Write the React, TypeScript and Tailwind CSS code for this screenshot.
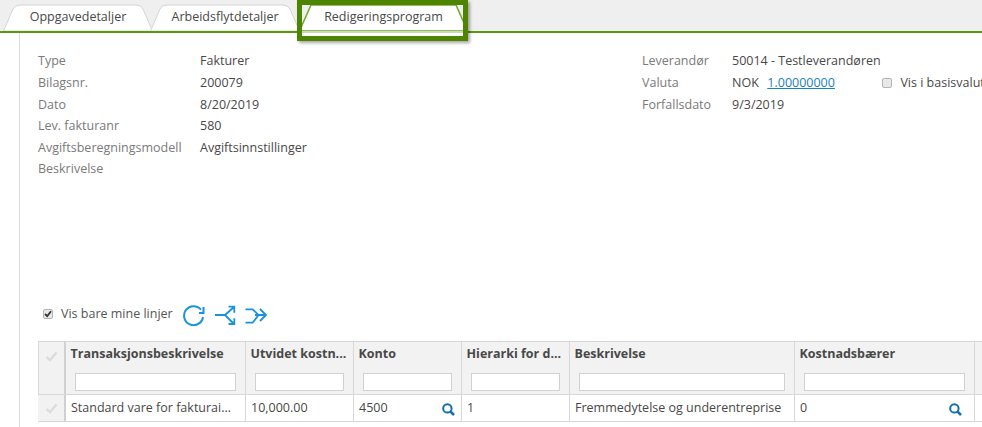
const FONT = "font-['Open_Sans',sans-serif]";

function Tab({ label, width, active, className = "" }: { label: string; width: number; active?: boolean; className?: string }) {
  const d = active
    ? `M0.5 31 L12 5 L${width - 12} 5 L${width - 0.5} 31 Z`
    : `M0.5 31 L10 9 Q12 5 17 5 L${width - 17} 5 Q${width - 12} 5 ${width - 10} 9 L${width - 0.5} 31 Z`;
  return (
    <div
      className={`relative flex h-[31px] items-center justify-center pt-[4px] text-[12.5px] text-[#484848] ${className}`}
      style={{ width }}
    >
      <svg className="absolute inset-0 h-full w-full" viewBox={`0 0 ${width} 31`} preserveAspectRatio="none">
        <path d={d} fill="#fff" stroke={active ? "#72a82e" : "#d4d4d4"} strokeWidth={active ? 1.5 : 1} />
      </svg>
      <span className="relative">{label}</span>
    </div>
  );
}

function Field({ label, children, labelWidth }: { label: string; children?: React.ReactNode; labelWidth: string }) {
  return (
    <div className="flex h-[21.6px] items-center">
      <span className={`${labelWidth} shrink-0 text-[#7a7a7a]`}>{label}</span>
      <span className="flex items-center whitespace-nowrap text-[#484848]">{children}</span>
    </div>
  );
}

function Box({ checked, className = "" }: { checked?: boolean; className?: string }) {
  return (
    <span className={`flex h-[10px] w-[10px] shrink-0 items-center justify-center rounded-[2px] border border-[#b4b4b4] bg-[#e8e8e8] ${className}`}>
      {checked && (
        <svg width="8" height="8" viewBox="0 0 8 8" fill="none" stroke="#333" strokeWidth="1.8">
          <path d="M1 4 L3.2 6.2 L7 1.2" />
        </svg>
      )}
    </span>
  );
}

function CheckMark() {
  return (
    <svg width="13" height="11" viewBox="0 0 13 11" fill="none" stroke="#dcdcdc" strokeWidth="2.4">
      <path d="M1.5 6 L5 9 L11.5 1.5" />
    </svg>
  );
}

function SearchIcon({ className }: { className: string }) {
  return (
    <svg className={`absolute top-[8px] ${className}`} width="13" height="13" viewBox="0 0 13 13" fill="none" stroke="#146fa8">
      <circle cx="5.4" cy="5.4" r="4.2" strokeWidth="2" />
      <path d="M8.6 8.6 L12 12" strokeWidth="2.6" />
    </svg>
  );
}

const columns = [
  { title: "Transaksjonsbeskrivelse", value: "Standard vare for fakturai...", width: "w-[180px]" },
  { title: "Utvidet kostn...", value: "10,000.00", width: "w-[108px]" },
  { title: "Konto", value: "4500", width: "w-[108px]", search: "right-[6px]" },
  { title: "Hierarki for d...", value: "1", width: "w-[108px]" },
  { title: "Beskrivelse", value: "Fremmedytelse og underentreprise", width: "w-[225px]" },
  { title: "Kostnadsbærer", value: "0", width: "w-[180px]", search: "right-[12px]" },
];

export default function App() {
  return (
    <div className={`${FONT} h-[427px] w-[982px] overflow-hidden bg-white text-[12.5px]`}>
      <div className="relative h-[33px] border-b-2 border-[#5a9a08] bg-[#efefef]">
        <div className="flex h-[31px] pl-[3px]">
          <Tab label="Oppgavedetaljer" width={150} />
          <Tab label="Arbeidsflytdetaljer" width={150} className="-ml-[3px]" />
          <Tab label="Redigeringsprogram" width={169} active className="-ml-[1px]" />
        </div>
        <div className="absolute left-[302px] top-[31px] h-[2px] w-[161px] bg-[#c8deb0]" />
        <div className="absolute left-[297px] top-0 h-[41px] w-[171px] border-[5px] border-[#4e8400] shadow-[2px_2px_3px_rgba(0,0,0,0.35)]" />
      </div>

      <div className="ml-[19px] h-[394px] border-l border-[#dcdcdc] pl-[18px]">
        <div className="flex h-[266px] pt-[18px]">
          <div className="w-[604px] shrink-0">
            <Field label="Type" labelWidth="w-[162px]">Fakturer</Field>
            <Field label="Bilagsnr." labelWidth="w-[162px]">200079</Field>
            <Field label="Dato" labelWidth="w-[162px]">8/20/2019</Field>
            <Field label="Lev. fakturanr" labelWidth="w-[162px]">580</Field>
            <Field label="Avgiftsberegningsmodell" labelWidth="w-[162px]">Avgiftsinnstillinger</Field>
            <Field label="Beskrivelse" labelWidth="w-[162px]" />
          </div>
          <div className="shrink-0">
            <Field label="Leverandør" labelWidth="w-[90px]">50014 - Testleverandøren</Field>
            <Field label="Valuta" labelWidth="w-[90px]">
              NOK
              <a className="ml-[8.5px] text-[#1a7fbd] underline">1.00000000</a>
              <Box className="ml-[47px]" />
              <span className="ml-[8.5px]">Vis i basisvaluta</span>
            </Field>
            <Field label="Forfallsdato" labelWidth="w-[90px]">9/3/2019</Field>
          </div>
        </div>

        <div className="flex h-[30px] items-center">
          <Box checked className="ml-[5px]" />
          <span className="ml-[8px] text-[#555]">Vis bare mine linjer</span>
          <svg className="ml-[10px] mt-[2px]" width="22" height="22" viewBox="0 0 22 22" fill="none" stroke="#1a92dc" strokeWidth="2">
            <path d="M20 13 A9.5 9.5 0 1 1 18 5.7" />
            <path d="M20.5 3 V9 H16" />
          </svg>
          <svg className="ml-[9.5px] mt-[2px]" width="22" height="22" viewBox="0 0 22 22" fill="none" stroke="#1a92dc" strokeWidth="1.8">
            <path d="M1 11 H11 L20 3 M11 11 L20 20 M14.5 2.7 H20.3 V8.7 M14.5 20 H20.3 V14.3" />
          </svg>
          <svg className="ml-[9px] mt-[2px]" width="22" height="22" viewBox="0 0 22 22" fill="none" stroke="#1a92dc" strokeWidth="1.8">
            <path d="M0.5 5.3 H7.7 L13.5 11 L7.7 18.7 H0.5 M10 11 H21 M15 5 L21 11 L15 17" />
          </svg>
        </div>

        <div className="mt-[12px] w-[960px] text-[#484848]">
          <div className="flex h-[54px] border border-[#d8d8d8] bg-[#f2f2f2]">
            <div className="flex w-[27px] shrink-0 justify-center border-r-2 border-[#d0d0d0] pt-[9px]">
              <CheckMark />
            </div>
            {columns.map((c) => (
              <div key={c.title} className={`${c.width} shrink-0 border-r border-[#d8d8d8] pt-[2px]`}>
                <div className="truncate px-[4.5px] font-bold leading-[20px]">{c.title}</div>
                <div className="mx-[9px] mt-[9px] h-[18px] border border-[#d2d2d2] bg-white" />
              </div>
            ))}
            <div className="flex-1" />
          </div>
          <div className="flex h-[27px] border-b border-[#d8d8d8]">
            <div className="flex w-[28px] shrink-0 items-center justify-center border-r-2 border-[#d0d0d0] bg-[#f2f2f2]">
              <CheckMark />
            </div>
            {columns.map((c) => (
              <div key={c.title} className={`${c.width} relative flex shrink-0 items-center border-r border-[#d8d8d8] px-[5px] pt-[1px]`}>
                <span className="truncate">{c.value}</span>
                {c.search && <SearchIcon className={c.search} />}
              </div>
            ))}
          </div>
        </div>
      </div>
    </div>
  );
}
